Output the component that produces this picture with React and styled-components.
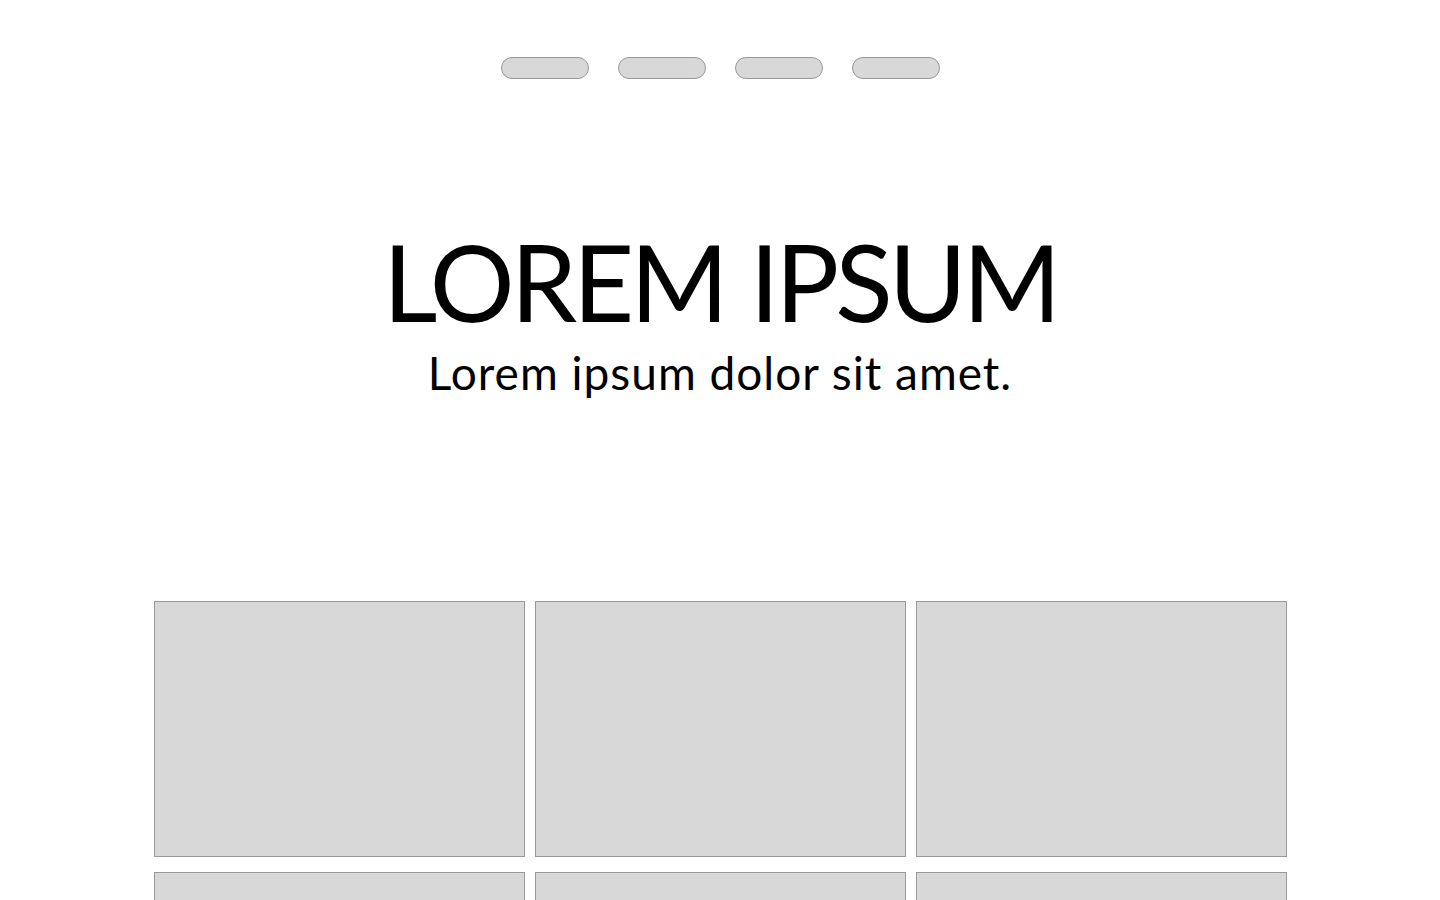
import React from 'react'
import styled, { createGlobalStyle } from 'styled-components'

const GlobalStyle = createGlobalStyle`
    body {
        margin: 0;
        background: #ffffff;
        font-family: Lato, "Open Sans", sans-serif;
        overflow: hidden;
    }
`

const Page = styled.div`
    display: flex;
    flex-direction: column;
    align-items: center;
    width: 1440px;
`

const Nav = styled.nav`
    display: flex;
    gap: 29px;
    margin-top: 57px;
`

const NavPill = styled.div`
    width: 88px;
    height: 22px;
    box-sizing: border-box;
    background-color: #d8d8d8;
    border: 1px solid #999999;
    border-radius: 11px;
`

const Hero = styled.header`
    display: flex;
    flex-direction: column;
    align-items: center;
    margin-top: 149px;
    color: #000;
`

const Title = styled.h1`
    margin: 0;
    font-family: Lato, sans-serif;
    font-weight: 400;
    font-size: 106px;
    line-height: 106px;
    letter-spacing: -4px;
    word-spacing: 2px;
`

const Subtitle = styled.p`
    margin: 0;
    margin-top: 11px;
    font-family: Lato, sans-serif;
    font-weight: 400;
    font-size: 46px;
    line-height: 56px;
    letter-spacing: 1px;
`

const Gallery = styled.section`
    display: grid;
    grid-template-columns: repeat(3, 371px);
    grid-auto-rows: 256px;
    column-gap: 10px;
    row-gap: 15px;
    margin-top: 200px;
`

const Tile = styled.div`
    box-sizing: border-box;
    background-color: #d8d8d8;
    border: 1px solid #999999;
`

export default function App() {
    const pills = [1, 2, 3, 4]
    const tiles = [1, 2, 3, 4, 5, 6]

    return (
        <Page>
            <GlobalStyle />
            <Nav>
                {pills.map((p) => <NavPill key={p} />)}
            </Nav>
            <Hero>
                <Title>LOREM IPSUM</Title>
                <Subtitle>Lorem ipsum dolor sit amet.</Subtitle>
            </Hero>
            <Gallery>
                {tiles.map((t) => <Tile key={t} />)}
            </Gallery>
        </Page>
    )
}
